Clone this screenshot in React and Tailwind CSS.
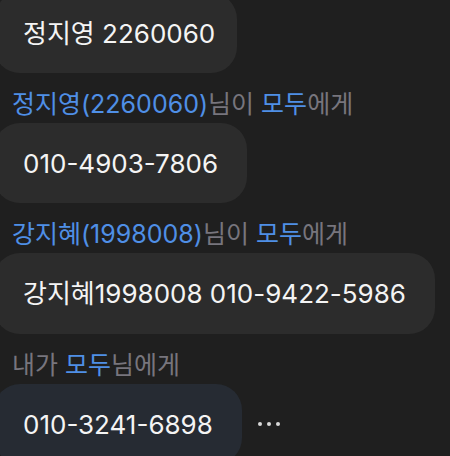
export default function App() {
  const font = { fontFamily: '"Inter", "Noto Sans CJK KR", sans-serif' };
  return (
    <div
      className="w-[450px] h-[456px] overflow-hidden bg-[#1f1f1f] text-white"
      style={font}
    >
      <div className="flex flex-col -mt-[7px] -ml-[6px] items-start">
        {/* 메시지 1 */}
        <div className="h-[80px] flex items-center rounded-[26px] bg-[#2c2c2c] pl-[29px] pr-[22px] text-[26px] text-[#f4f4f4]">
          정지영 2260060
        </div>

        <div className="mt-4 mb-1 pl-[18px] text-[25px] leading-[30px] text-[#77757d]">
          <span className="text-[#4f8fe6]">정지영(2260060)</span>님이{' '}
          <span className="text-[#4f8fe6]">모두</span>에게
        </div>
        <div className="h-[80px] flex items-center rounded-[26px] bg-[#2c2c2c] pl-[29px] pr-[29px] text-[26px] text-[#f4f4f4]">
          010-4903-7806
        </div>

        <div className="mt-4 mb-1 pl-[18px] text-[25px] leading-[30px] text-[#77757d]">
          <span className="text-[#4f8fe6]">강지혜(1998008)</span>님이{' '}
          <span className="text-[#4f8fe6]">모두</span>에게
        </div>
        <div className="h-[81px] flex items-center rounded-[26px] bg-[#2c2c2c] pl-[29px] pr-[29px] text-[26px] text-[#f4f4f4]">
          강지혜1998008 010-9422-5986
        </div>

        {/* 내 메시지 */}
        <div className="mt-4 mb-1 pl-[18px] text-[25px] leading-[30px] text-[#77757d]">
          내가 <span className="text-[#4f8fe6]">모두</span>님에게
        </div>
        <div className="flex items-center">
          <div className="h-[80px] flex items-center rounded-[26px] bg-[#262b33] pl-[29px] pr-[29px] text-[26px] text-[#f4f4f4]">
            010-3241-6898
          </div>
          <div className="ml-[16px] flex gap-[5px]">
            <span className="w-[4px] h-[4px] rounded-full bg-[#d8d8d8]" />
            <span className="w-[4px] h-[4px] rounded-full bg-[#d8d8d8]" />
            <span className="w-[4px] h-[4px] rounded-full bg-[#d8d8d8]" />
          </div>
        </div>
      </div>
    </div>
  );
}
